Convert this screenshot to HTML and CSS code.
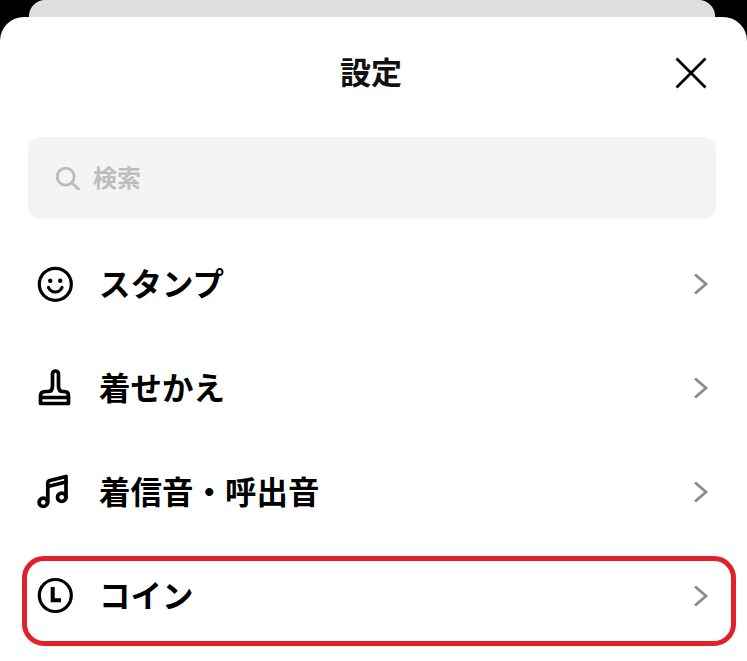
FILE: index.html
```html
<!DOCTYPE html>
<html lang="ja">
<head>
<meta charset="utf-8">
<title>設定</title>
<link rel="stylesheet" href="styles.css">
</head>
<body>
<div class="backcard"></div>
<section class="sheet">
  <header class="head">
    <h1 class="title">設定</h1>
    <svg class="close" viewBox="0 0 32 32" width="32" height="32"><path d="M1.500 1.500 L30.500 30.500 M30.500 1.500 L1.500 30.500"/></svg>
  </header>
  <div class="search">
    <svg class="search-icon" viewBox="0 0 24 24" width="24" height="24"><circle cx="9.700" cy="10.700" r="8.500"/><path d="M15.800 16.800 L22.500 23"/></svg>
    <span class="search-text">検索</span>
  </div>
  <ul class="list">
    <li class="row">
      <svg class="icon" viewBox="0 0 36 36" width="36" height="36"><circle cx="18.300" cy="18.300" r="16"/><circle class="dot" cx="13.200" cy="14.700" r="2.200"/><circle class="dot" cx="23.200" cy="14.700" r="2.200"/><path d="M11.500 21.500 C14 27.500 22.500 27.500 25 21.500"/></svg>
      <span class="label">スタンプ</span>
      <svg class="chev" viewBox="0 0 16 24" width="16" height="24"><path d="M2 2.500 L13 12 L2 21.500"/></svg>
    </li>
    <li class="row">
      <svg class="icon icon-bold" viewBox="0 0 36 36" width="36" height="36"><path d="M3.500 33.500 V26 C3.500 23 5.500 21.500 8.500 21.500 H11 C14 21.500 15.500 19.500 15.500 16 V4 A3 3 0 0 1 21.500 4 V16 C21.500 19.500 23 21.500 26 21.500 H27.500 C30.500 21.500 31.500 23 31.500 26 V33.500 Z M3.500 27.500 H31.500"/></svg>
      <span class="label">着せかえ</span>
      <svg class="chev" viewBox="0 0 16 24" width="16" height="24"><path d="M2 2.500 L13 12 L2 21.500"/></svg>
    </li>
    <li class="row">
      <svg class="icon icon-bold" viewBox="0 0 36 36" width="36" height="36"><circle cx="6.300" cy="28.300" r="4.200"/><circle cx="24.700" cy="23.300" r="4.200"/><path d="M10.800 28.300 V9 C10.800 7.500 11.800 6.800 13 6.500 L29 2.500 V23.300"/><path d="M10.800 12.500 L29 8"/></svg>
      <span class="label">着信音・呼出音</span>
      <svg class="chev" viewBox="0 0 16 24" width="16" height="24"><path d="M2 2.500 L13 12 L2 21.500"/></svg>
    </li>
    <li class="row">
      <svg class="icon" viewBox="0 0 36 36" width="36" height="36"><circle cx="18.300" cy="17.500" r="16"/><path class="thick" d="M15.700 9 V22.300 H24"/></svg>
      <span class="label label-coin">コイン</span>
      <svg class="chev" viewBox="0 0 16 24" width="16" height="24"><path d="M2 2.500 L13 12 L2 21.500"/></svg>
    </li>
  </ul>
  <div class="highlight"></div>
</section>
</body>
</html>
```
FILE: styles.css
```css
* { box-sizing: border-box; }
html, body { margin: 0; padding: 0; }
body {
  width: 747px;
  height: 661px;
  overflow: hidden;
  background: #000;
  font-family: "Noto Sans CJK JP", "Noto Sans", sans-serif;
  position: relative;
}
.backcard {
  height: 17px;
  margin: 0 32px 0 29px;
  background: #dedede;
  border-radius: 16px 16px 0 0;
}
.sheet {
  position: relative;
  height: 644px;
  background: #fff;
  border-radius: 24px 24px 0 0;
  padding: 0 28px;
}
.head {
  height: 120px;
  padding: 0 5px 12px 0;
  display: flex;
  align-items: center;
  justify-content: center;
  position: relative;
}
.title {
  margin: 0;
  font-size: 31px;
  line-height: 40px;
  font-weight: 700;
  color: #111;
}
.close {
  position: absolute;
  top: 40px;
  right: 12px;
  fill: none;
  stroke: #000;
  stroke-width: 2.800;
}
.search {
  width: 688px;
  height: 82px;
  background: #f4f4f4;
  border-radius: 12px;
  display: flex;
  align-items: center;
  gap: 13px;
  padding: 0 0 0 28px;
}
.search-icon {
  fill: none;
  stroke: #bbb;
  stroke-width: 2.800;
  stroke-linecap: round;
  flex: none;
}
.search-text {
  font-size: 24px;
  font-weight: 700;
  color: #bdbdbd;
  line-height: 32px;
  margin-bottom: 2px;
}
.list {
  list-style: none;
  margin: 13px 0 0;
  padding: 0;
}
.row {
  height: 104px;
  display: flex;
  align-items: center;
}
.icon {
  flex: none;
  margin-left: 9px;
  overflow: visible;
  fill: none;
  stroke: #000;
  stroke-width: 3.200;
  stroke-linecap: round;
  stroke-linejoin: round;
}
.icon-bold { stroke-width: 3.700; }
.dot { fill: #000; stroke: none; }
.thick { stroke-width: 4; stroke-linecap: butt; stroke-linejoin: miter; }
.label {
  margin: 0 0 4px 26px;
  font-size: 31.500px;
  line-height: 40px;
  font-weight: 700;
  color: #000;
  flex: 1;
}
.label-coin { margin-left: 26px; }
.chev {
  flex: none;
  margin-right: 10px;
  fill: none;
  stroke: #8c8c8c;
  stroke-width: 2.800;
}
.highlight {
  position: absolute;
  left: 22px;
  top: 539px;
  width: 714px;
  height: 90px;
  border: 5px solid #e21f2b;
  border-radius: 22px;
}
```
